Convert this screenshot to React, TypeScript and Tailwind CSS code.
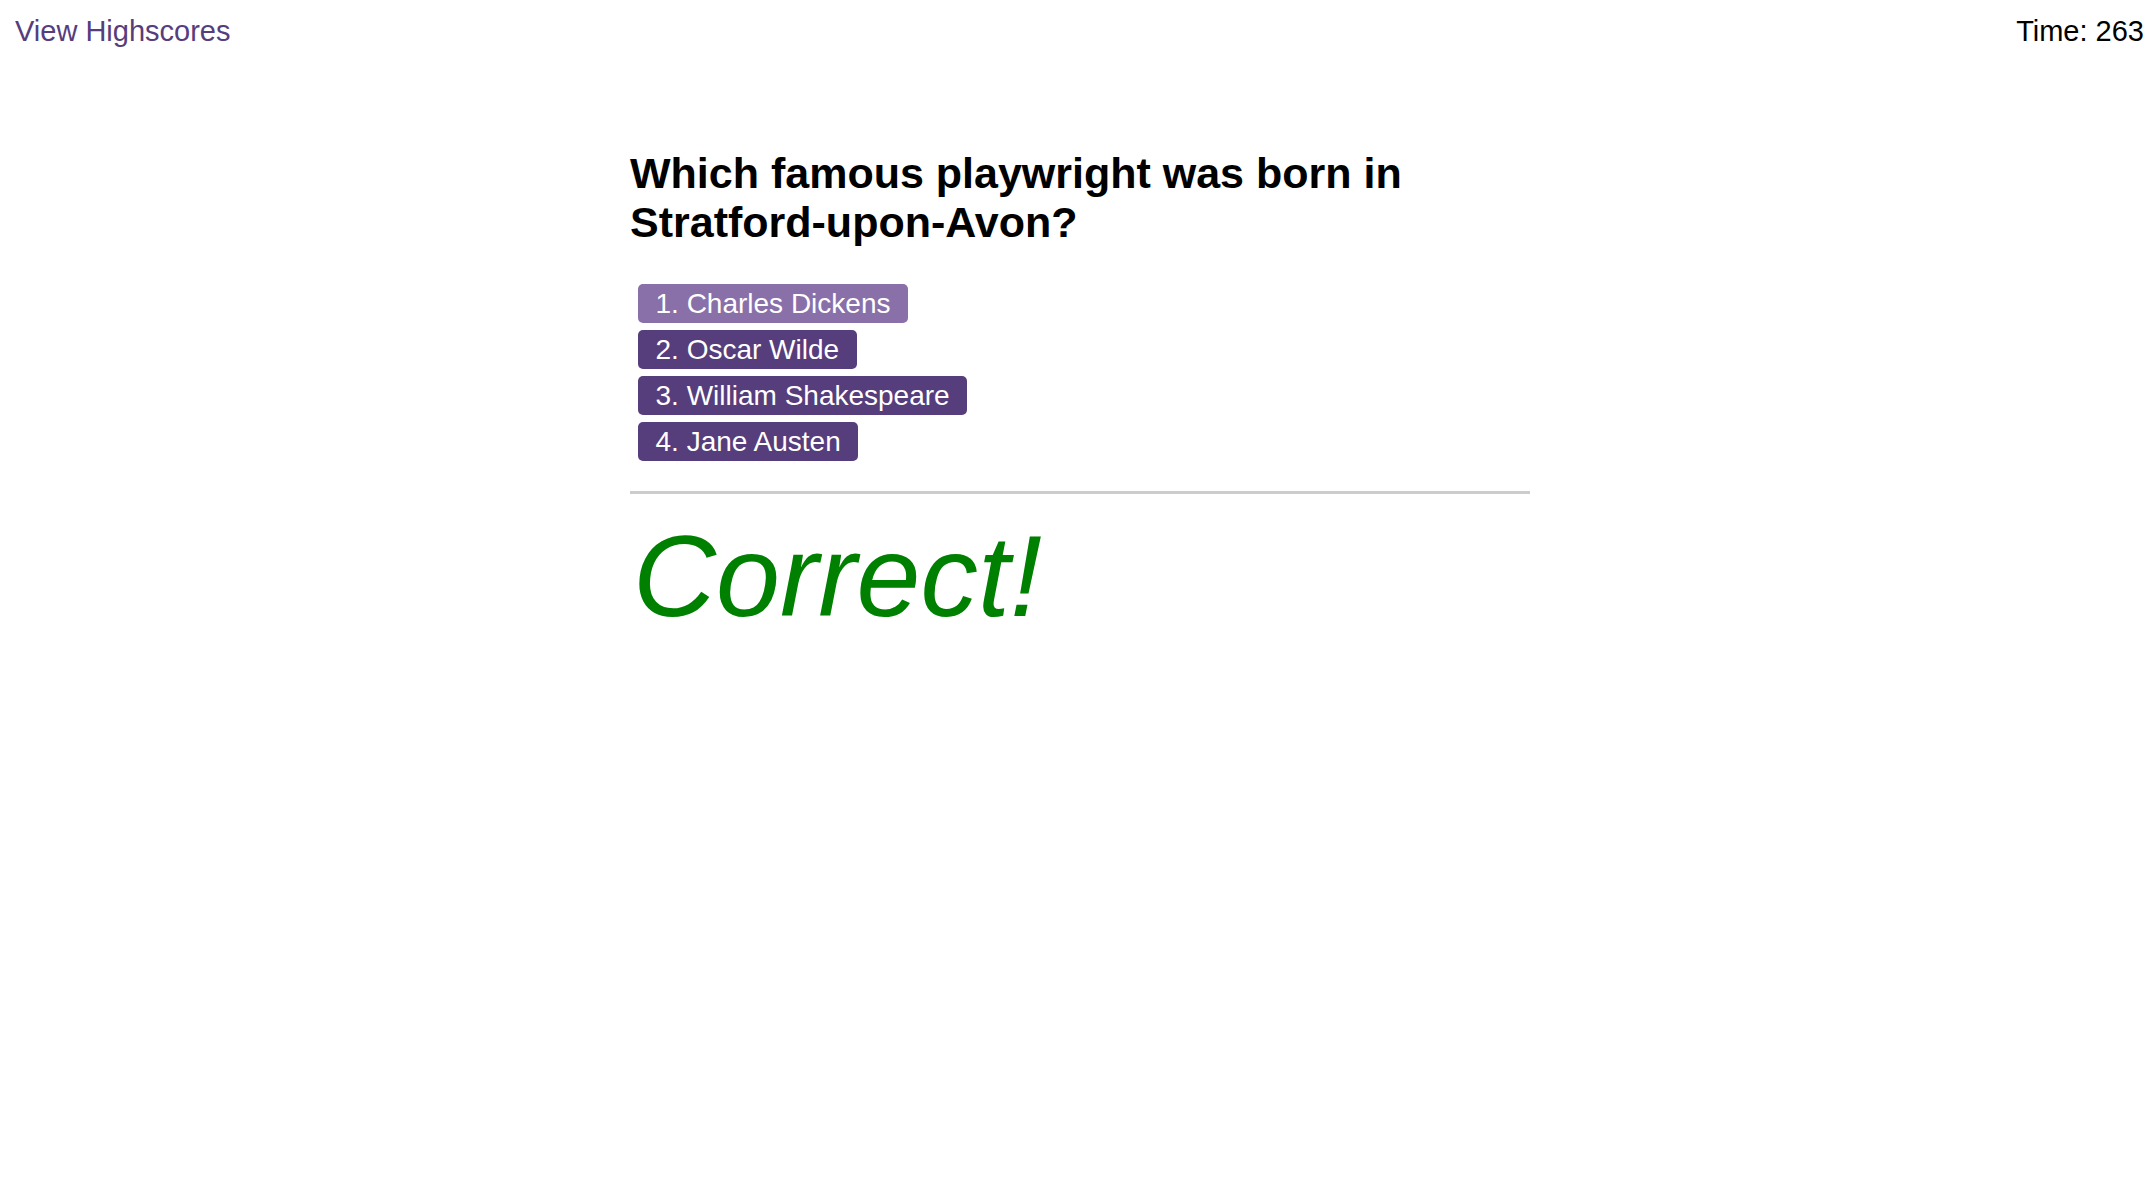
const answers = [
  "Charles Dickens",
  "Oscar Wilde",
  "William Shakespeare",
  "Jane Austen",
];

export default function App() {
  return (
    <div className="min-h-screen bg-white text-black font-['Liberation_Sans',Arial,sans-serif]">
      <header className="flex items-start justify-between pl-[15px] pr-[11px] pt-[15px] text-[29px] leading-[33px]">
        <a href="#" className="text-[#563d7c]">
          View Highscores
        </a>
        <span>Time: 263</span>
      </header>

      <main className="flex justify-center pl-[5px] pt-[101px]">
        <div className="w-[900px]">
          <h2 className="text-[43px] font-bold leading-[49px]">
            Which famous playwright was born in Stratford-upon-Avon?
          </h2>

          <ol className="mt-[37px] ml-[8px] flex flex-col items-start gap-[7px]">
            {answers.map((answer, i) => (
              <li key={answer}>
                <button
                  className={
                    i === 0
                      ? "rounded-[5px] bg-[#8970a8] px-[17.5px] py-[3.5px] text-[28px] leading-[32px] text-white"
                      : "rounded-[5px] bg-[#563d7c] px-[17.5px] py-[3.5px] text-[28px] leading-[32px] text-white"
                  }
                >
                  {i + 1}. {answer}
                </button>
              </li>
            ))}
          </ol>

          <hr className="mt-[30px] border-0 border-t-[3px] border-[#cccccc]" />

          <p className="mt-[16px] pl-[3px] text-[115px] italic leading-[132px] text-[#008000]">
            Correct!
          </p>
        </div>
      </main>
    </div>
  );
}
